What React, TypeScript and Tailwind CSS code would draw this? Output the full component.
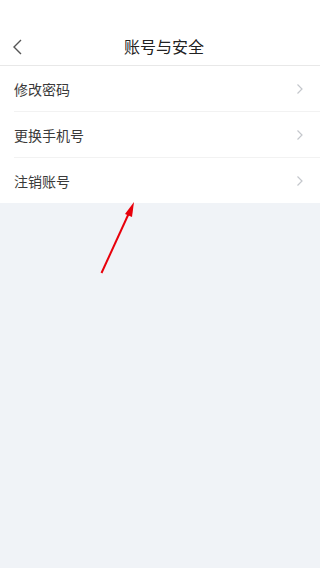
import React from 'react';

const items = ['修改密码', '更换手机号', '注销账号'];

function Chevron() {
  return (
    <svg width="8" height="12" viewBox="0 0 8 12" fill="none">
      <path d="M1.5 1.5 6 6l-4.5 4.5" stroke="#c4c7cc" strokeWidth="1.2" />
    </svg>
  );
}

export default function App() {
  return (
    <div
      className="w-[320px] h-[568px] bg-[#f0f3f7] flex flex-col relative overflow-hidden"
      style={{ fontFamily: '"Noto Sans CJK SC", "Noto Sans", sans-serif' }}
    >
      <div className="bg-white h-[25px]" />
      <div className="bg-white h-[41px] flex items-center relative border-b border-[#e8e8e8]">
        <div className="absolute left-[12px] top-[14px]">
          <svg width="12" height="16" viewBox="0 0 12 16" fill="none">
            <path d="M9 1 2 8l7 7" stroke="#555" strokeWidth="1.4" />
          </svg>
        </div>
        <div className="flex-1 text-center text-[16px] text-[#222] leading-none pt-[2px] pl-[8px]">账号与安全</div>
      </div>
      <div className="bg-white flex flex-col">
        {items.map((t, i) => (
          <div key={t} className="pl-[14px]">
            <div
              className={
                i < items.length - 1
                  ? 'h-[46px] flex items-center justify-between pr-[16px] border-b border-[#f2f2f2]'
                  : 'h-[45px] flex items-center justify-between pr-[16px]'
              }
            >
              <span className="text-[14px] text-[#3a3a3a] pt-[1px]">{t}</span>
              <Chevron />
            </div>
          </div>
        ))}
      </div>
      <svg className="absolute left-0 top-0" width="320" height="568" viewBox="0 0 320 568">
        <line x1="101.5" y1="273" x2="129" y2="213" stroke="#e8000b" strokeWidth="2" />
        <path d="M134 202 L125 214 L132 217 Z" fill="#e8000b" />
      </svg>
    </div>
  );
}
